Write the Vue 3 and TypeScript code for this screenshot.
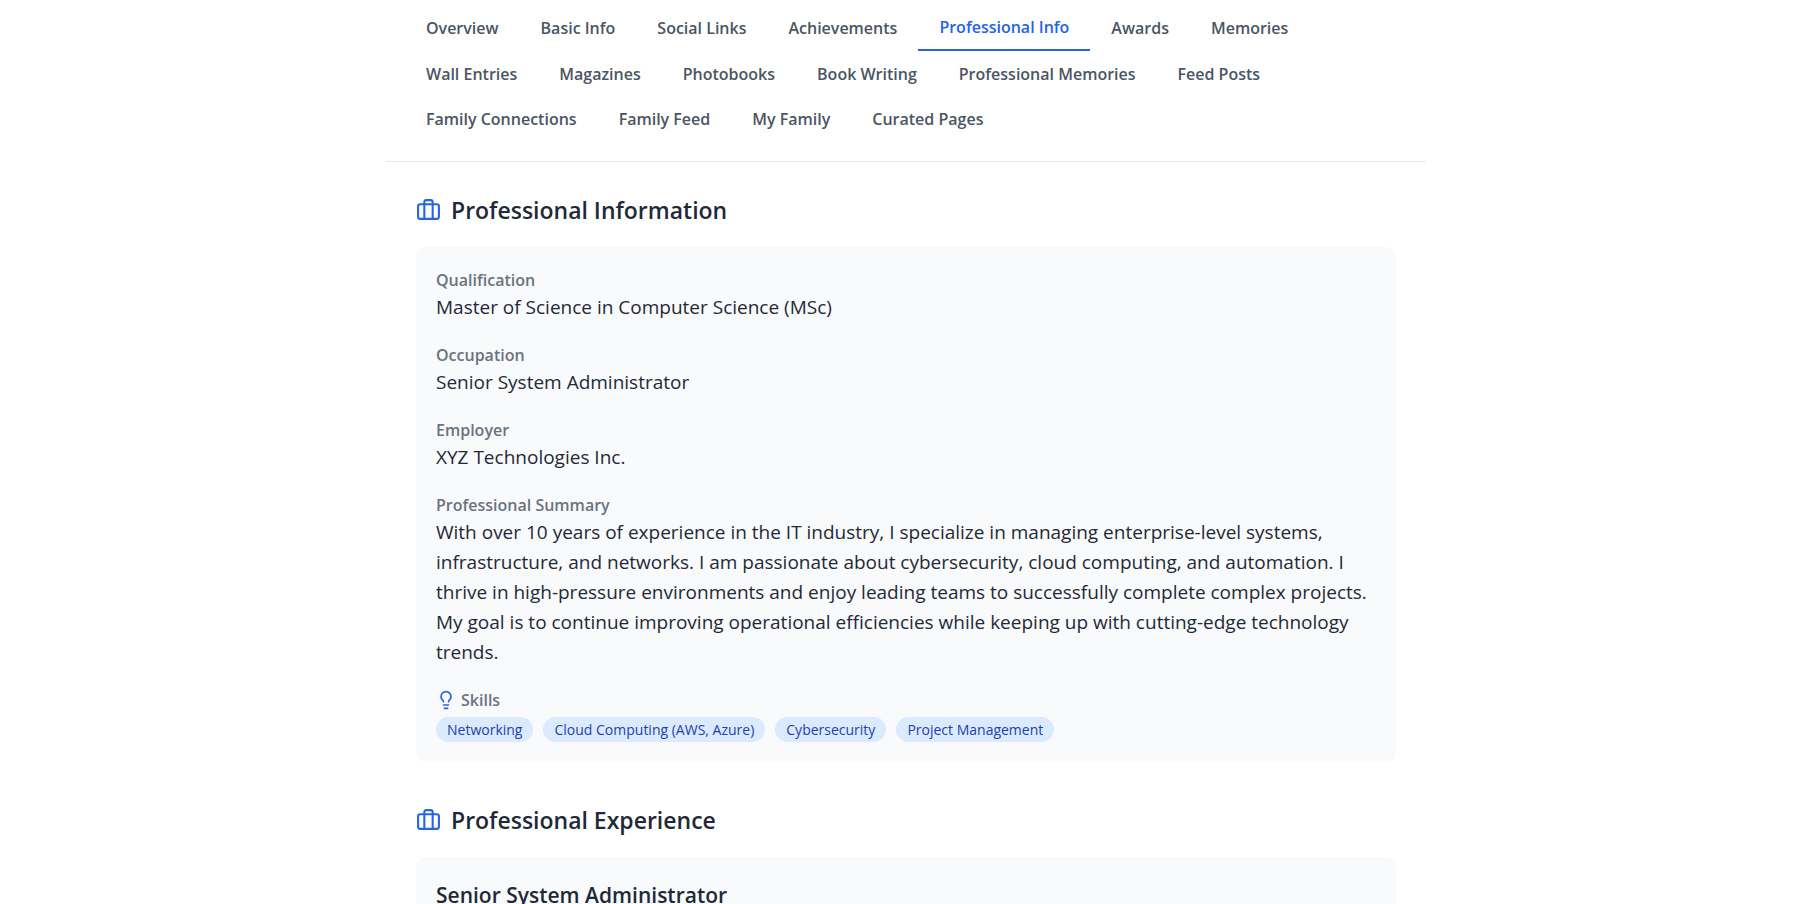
<script setup lang="ts">
import { ref } from 'vue'

interface Detail {
  label: string
  value: string
}

const tabs: string[] = [
  'Overview',
  'Basic Info',
  'Social Links',
  'Achievements',
  'Professional Info',
  'Awards',
  'Memories',
  'Wall Entries',
  'Magazines',
  'Photobooks',
  'Book Writing',
  'Professional Memories',
  'Feed Posts',
  'Family Connections',
  'Family Feed',
  'My Family',
  'Curated Pages',
]

const activeTab = ref('Professional Info')

const details: Detail[] = [
  { label: 'Qualification', value: 'Master of Science in Computer Science (MSc)' },
  { label: 'Occupation', value: 'Senior System Administrator' },
  { label: 'Employer', value: 'XYZ Technologies Inc.' },
  {
    label: 'Professional Summary',
    value:
      'With over 10 years of experience in the IT industry, I specialize in managing enterprise-level systems, infrastructure, and networks. I am passionate about cybersecurity, cloud computing, and automation. I thrive in high-pressure environments and enjoy leading teams to successfully complete complex projects. My goal is to continue improving operational efficiencies while keeping up with cutting-edge technology trends.',
  },
]

const skills: string[] = [
  'Networking',
  'Cloud Computing (AWS, Azure)',
  'Cybersecurity',
  'Project Management',
]
</script>

<template>
  <div class="page">
    <main class="profile">
      <nav class="tabs" role="tablist" aria-label="Profile sections">
        <button
          v-for="tab in tabs"
          :key="tab"
          type="button"
          role="tab"
          class="tab"
          :class="{ active: tab === activeTab }"
          :aria-selected="tab === activeTab"
          @click="activeTab = tab"
        >
          {{ tab }}
        </button>
      </nav>

      <div class="content">
        <section>
          <h2 class="heading">
            <svg class="icon" viewBox="0 0 24 24" aria-hidden="true">
              <path d="M16 20V4a2 2 0 0 0-2-2h-4a2 2 0 0 0-2 2v16" />
              <rect x="2" y="6" width="20" height="14" rx="2" />
            </svg>
            Professional Information
          </h2>
          <div class="card">
            <dl class="details">
              <div v-for="item in details" :key="item.label">
                <dt class="label">{{ item.label }}</dt>
                <dd class="value">{{ item.value }}</dd>
              </div>
            </dl>
            <div class="skills">
              <h3 class="label skills-label">
                <svg class="icon small" viewBox="0 0 24 24" aria-hidden="true">
                  <path
                    d="M15 14c.2-1 .7-1.7 1.5-2.5 1-.9 1.5-2.2 1.5-3.5A6 6 0 0 0 6 8c0 1 .2 2.2 1.5 3.5.7.7 1.3 1.5 1.5 2.5"
                  />
                  <path d="M9 18h6" />
                  <path d="M10 22h4" />
                </svg>
                Skills
              </h3>
              <ul class="tags">
                <li v-for="skill in skills" :key="skill" class="tag">{{ skill }}</li>
              </ul>
            </div>
          </div>
        </section>

        <section>
          <h2 class="heading">
            <svg class="icon" viewBox="0 0 24 24" aria-hidden="true">
              <path d="M16 20V4a2 2 0 0 0-2-2h-4a2 2 0 0 0-2 2v16" />
              <rect x="2" y="6" width="20" height="14" rx="2" />
            </svg>
            Professional Experience
          </h2>
          <div class="card">
            <h3 class="job">Senior System Administrator</h3>
          </div>
        </section>
      </div>
    </main>
  </div>
</template>

<style>
body {
  background: #ffffff;
}
</style>

<style scoped>
.page {
  padding: 4px 0 0 3px;
  font-family: 'Segoe UI', 'Open Sans', 'Noto Sans', sans-serif;
  color: #1f2937;
}

.profile {
  max-width: 1040px;
  margin: 0 auto;
}

.tabs {
  display: flex;
  flex-wrap: wrap;
  padding: 0 19px 20px;
  border-bottom: 1px solid #e5e7eb;
}

.tab {
  padding: 11px 21px 9px;
  border: 0;
  background: none;
  font-family: inherit;
  font-size: 16px;
  font-weight: 600;
  line-height: 25px;
  color: #4b5563;
  cursor: pointer;
}

.tab.active {
  border-bottom: 2px solid #2563eb;
  color: #2563eb;
}

.content {
  display: flex;
  flex-direction: column;
  gap: 40px;
  padding: 30px;
}

.heading {
  display: flex;
  align-items: center;
  gap: 10px;
  margin: 0 0 19px;
  padding-top: 1px;
  font-size: 23px;
  font-weight: 600;
  line-height: 35px;
}

.icon {
  flex: none;
  width: 25px;
  height: 25px;
  fill: none;
  stroke: #2563eb;
  stroke-width: 2;
  stroke-linecap: round;
  stroke-linejoin: round;
}

.icon.small {
  width: 20px;
  height: 20px;
}

.card {
  padding: 20px;
  border-radius: 10px;
  background: #f9fafb;
}

.details {
  display: flex;
  flex-direction: column;
  gap: 20px;
  margin: 0 0 20px;
}

.label {
  margin: 0;
  padding-top: 1px;
  font-size: 16px;
  font-weight: 600;
  line-height: 24px;
  color: #6b7280;
}

.value {
  margin: 0;
  font-size: 19px;
  line-height: 30px;
}

.skills-label {
  display: flex;
  align-items: center;
  gap: 5px;
  margin-bottom: 5px;
}

.tags {
  display: flex;
  flex-wrap: wrap;
  gap: 10px;
  margin: 0;
  padding: 0;
  list-style: none;
}

.tag {
  padding: 0 11px;
  border-radius: 13px;
  background: #dbeafe;
  font-size: 14px;
  line-height: 25px;
  color: #1e40af;
}

.job {
  margin: 0;
  font-size: 21px;
  font-weight: 600;
  line-height: 36px;
}
</style>
